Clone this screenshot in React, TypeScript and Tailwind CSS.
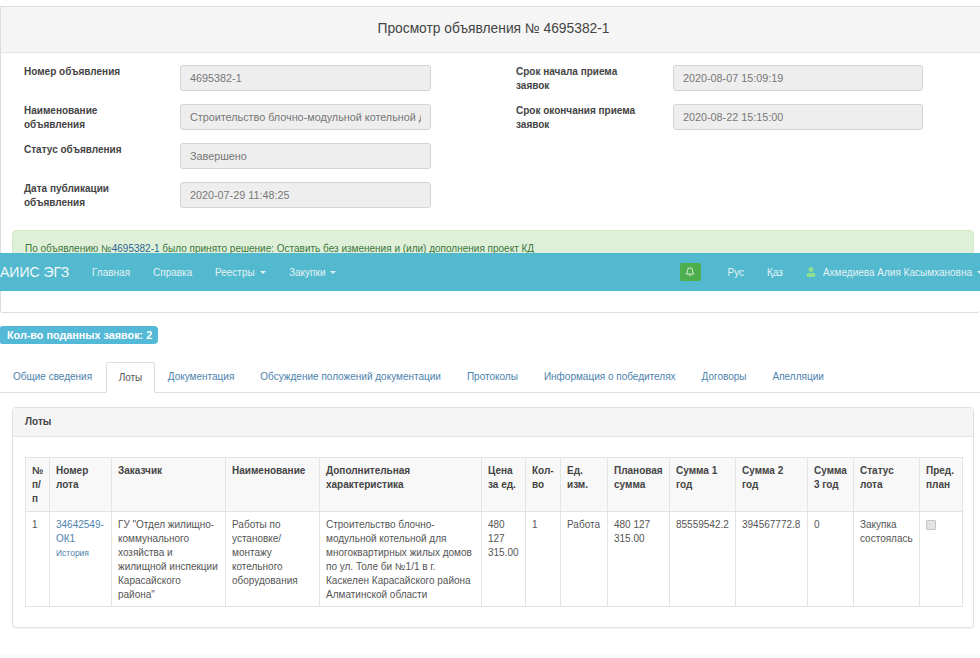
import { Bell } from 'lucide-react';
import { FaUser } from 'react-icons/fa';

const leftFields = [
  { label: 'Номер объявления', value: '4695382-1' },
  { label: 'Наименование объявления', value: 'Строительство блочно-модульной котельной для многоквартирных жилых домов' },
  { label: 'Статус объявления', value: 'Завершено' },
  { label: 'Дата публикации объявления', value: '2020-07-29 11:48:25' },
];

const rightFields = [
  { label: 'Срок начала приема заявок', value: '2020-08-07 15:09:19' },
  { label: 'Срок окончания приема заявок', value: '2020-08-22 15:15:00' },
];

const tabs = ['Общие сведения', 'Лоты', 'Документация', 'Обсуждение положений документации', 'Протоколы', 'Информация о победителях', 'Договоры', 'Апелляции'];

const columns = [
  { title: '№ п/п', width: 'w-[24px]' },
  { title: 'Номер лота', width: 'w-[62px]' },
  { title: 'Заказчик', width: 'w-[114px]' },
  { title: 'Наименование', width: 'w-[94px]' },
  { title: 'Дополнительная характеристика', width: 'w-[162px]' },
  { title: 'Цена за ед.', width: 'w-[44px]' },
  { title: 'Кол-во', width: 'w-[35px]' },
  { title: 'Ед. изм.', width: 'w-[47px]' },
  { title: 'Плановая сумма', width: 'w-[62px]' },
  { title: 'Сумма 1 год', width: 'w-[66px]' },
  { title: 'Сумма 2 год', width: 'w-[72px]' },
  { title: 'Сумма 3 год', width: 'w-[46px]' },
  { title: 'Статус лота', width: 'w-[66px]' },
  { title: 'Пред. план', width: 'w-[43px]' },
];

const Field = ({ label, value, labelWidth, inputWidth }: { label: string; value: string; labelWidth: string; inputWidth: string }) => (
  <div className="flex h-[39px] items-start">
    <div className={`${labelWidth} shrink-0 pr-8 text-[10px] font-bold leading-[14px] text-[#444]`}>{label}</div>
    <div className={`${inputWidth} h-[26px] rounded-[3px] border border-[#d4d4d4] bg-[#eeeeee] px-[9px] text-[10.8px] leading-[24px] text-[#777]`}>
      <div className="overflow-hidden whitespace-nowrap">{value}</div>
    </div>
  </div>
);

const Caret = () => (
  <span className="ml-[5px] inline-block border-x-[3px] border-t-[3px] border-x-transparent border-t-current align-middle" />
);

const Navbar = () => (
  <div className="absolute left-0 top-[253px] flex h-[38px] w-[980px] items-center overflow-hidden bg-[#53b9ce] text-[10px] text-[#e3f2f6]">
    <span className="w-[92px] text-[14px] text-[#f0f8fa]">АИИС ЭГЗ</span>
    <span className="w-[61px]">Главная</span>
    <span className="w-[62px]">Справка</span>
    <span className="w-[74px]">Реестры<Caret /></span>
    <span>Закупки<Caret /></span>
    <div className="ml-auto flex h-[18px] w-[21px] items-center justify-center rounded-[2px] bg-[#4cae4c]">
      <Bell size={10} strokeWidth={2} className="text-white" />
    </div>
    <span className="ml-[27px]">Рус</span>
    <span className="ml-[23px]">Қаз</span>
    <FaUser size={10} className="ml-[23px] text-[#8fe08f]" />
    <span className="ml-[7px] mr-[-3px] whitespace-nowrap">Ахмедиева Алия Касымхановна<Caret /></span>
  </div>
);

const LotsTable = () => (
  <table className="w-[937px] table-fixed border-collapse text-[10px] leading-[14px] text-[#555]">
    <colgroup>
      {columns.map((c) => (
        <col key={c.title} className={c.width} />
      ))}
    </colgroup>
    <thead>
      <tr className="h-[54px] bg-[#f8f8f8] text-left align-top">
        {columns.map((c) => (
          <th key={c.title} className="border border-[#e4e4e4] px-[6px] pt-[6px] font-bold text-[#444]">
            {c.title}
          </th>
        ))}
      </tr>
    </thead>
    <tbody>
      <tr className="h-[95px] align-top">
        <td className="border border-[#e4e4e4] px-[6px] pt-[6px]">1</td>
        <td className="border border-[#e4e4e4] px-[6px] pt-[6px]">
          <span className="text-[#4d82ad]">34642549-ОК1</span>
          <div className="text-[8.5px] text-[#4d82ad]">История</div>
        </td>
        <td className="border border-[#e4e4e4] px-[6px] pt-[6px]">ГУ "Отдел жилищно-коммунального хозяйства и жилищной инспекции Карасайского района"</td>
        <td className="border border-[#e4e4e4] px-[6px] pt-[6px]">Работы по установке/<br />монтажу котельного оборудования</td>
        <td className="border border-[#e4e4e4] px-[6px] pt-[6px]">Строительство блочно-модульной котельной для многоквартирных жилых домов по ул. Толе би №1/1 в г. Каскелен Карасайского района Алматинской области</td>
        <td className="border border-[#e4e4e4] px-[6px] pt-[6px]">480 127 315.00</td>
        <td className="border border-[#e4e4e4] px-[6px] pt-[6px]">1</td>
        <td className="border border-[#e4e4e4] px-[6px] pt-[6px]">Работа</td>
        <td className="border border-[#e4e4e4] px-[6px] pt-[6px]">480 127 315.00</td>
        <td className="border border-[#e4e4e4] px-[6px] pt-[6px]">85559542.2</td>
        <td className="border border-[#e4e4e4] px-[6px] pt-[6px]">394567772.8</td>
        <td className="border border-[#e4e4e4] px-[6px] pt-[6px]">0</td>
        <td className="border border-[#e4e4e4] px-[6px] pt-[6px]">Закупка состоялась</td>
        <td className="border border-[#e4e4e4] px-[6px] pt-[8px]">
          <div className="h-[10px] w-[10px] rounded-[1px] border border-[#c4c4c4] bg-[#e4e4e4]" />
        </td>
      </tr>
    </tbody>
  </table>
);

const App = () => {
  return (
    <div className="relative h-[658px] w-[980px] overflow-hidden bg-white font-['Liberation_Sans',Arial,sans-serif]">
      <div className="h-[6px]" />
      {/* Карточка объявления */}
      <div className="h-[307px] rounded-b-[3px] border border-t border-[#dddddd] border-r-0">
        <div className="flex h-[46px] items-center justify-center border-b border-[#e4e4e4] bg-[#f5f5f5] pl-[6px] text-[13.8px] text-[#444]">
          Просмотр объявления № 4695382-1
        </div>
        <div className="flex pt-[11px]">
          <div className="ml-[23px] w-[492px] pt-px">
            {leftFields.map((f) => (
              <Field key={f.label} label={f.label} value={f.value} labelWidth="w-[156px]" inputWidth="w-[251px]" />
            ))}
          </div>
          <div className="pt-px">
            {rightFields.map((f) => (
              <Field key={f.label} label={f.label} value={f.value} labelWidth="w-[157px]" inputWidth="w-[250px]" />
            ))}
          </div>
        </div>
        <div className="ml-[11px] mt-[9px] h-[38px] w-[962px] rounded-[4px] border border-[#d6e9c6] bg-[#dff0d8] px-3 py-[10px] text-[10px] text-[#3c763d]">
          По объявлению №<span className="text-[#2a6496]">4695382-1</span> было принято решение: Оставить без изменения и (или) дополнения проект КД
        </div>
      </div>

      <div className="mt-[13px] flex h-[18px] w-[158px] items-center whitespace-nowrap rounded-r-[4px] rounded-l-[2px] bg-[#53b9d6] pl-[7px] text-[10.8px] font-bold text-white">
        Кол-во поданных заявок: 2
      </div>

      <div className="mt-[18px] flex h-[31px] border-b border-[#dddddd] text-[10px] text-[#4d82ad]">
        {tabs.map((t, i) =>
          i === 1 ? (
            <div key={t} className="ml-px h-[31px] rounded-t-[3px] border border-[#dddddd] border-b-white bg-white px-[11.5px] leading-[29px] text-[#555]">
              {t}
            </div>
          ) : (
            <div key={t} className="px-[13px] leading-[30px]">{t}</div>
          ),
        )}
      </div>

      {/* Лоты */}
      <div className="ml-[12px] mt-[14px] h-[221px] w-[962px] rounded-[4px] border border-[#e0e0e0] shadow-[0_1px_1px_rgba(0,0,0,0.05)]">
        <div className="h-[29px] border-b border-[#e4e4e4] bg-[#f5f5f5] px-3 text-[10px] font-bold leading-[28px] text-[#444]">
          Лоты
        </div>
        <div className="pl-[12px] pt-[20px]">
          <LotsTable />
        </div>
      </div>

      <div className="mt-[27px] h-[4px] bg-[#fafafa]" />

      <Navbar />
    </div>
  );
};

export default App;
